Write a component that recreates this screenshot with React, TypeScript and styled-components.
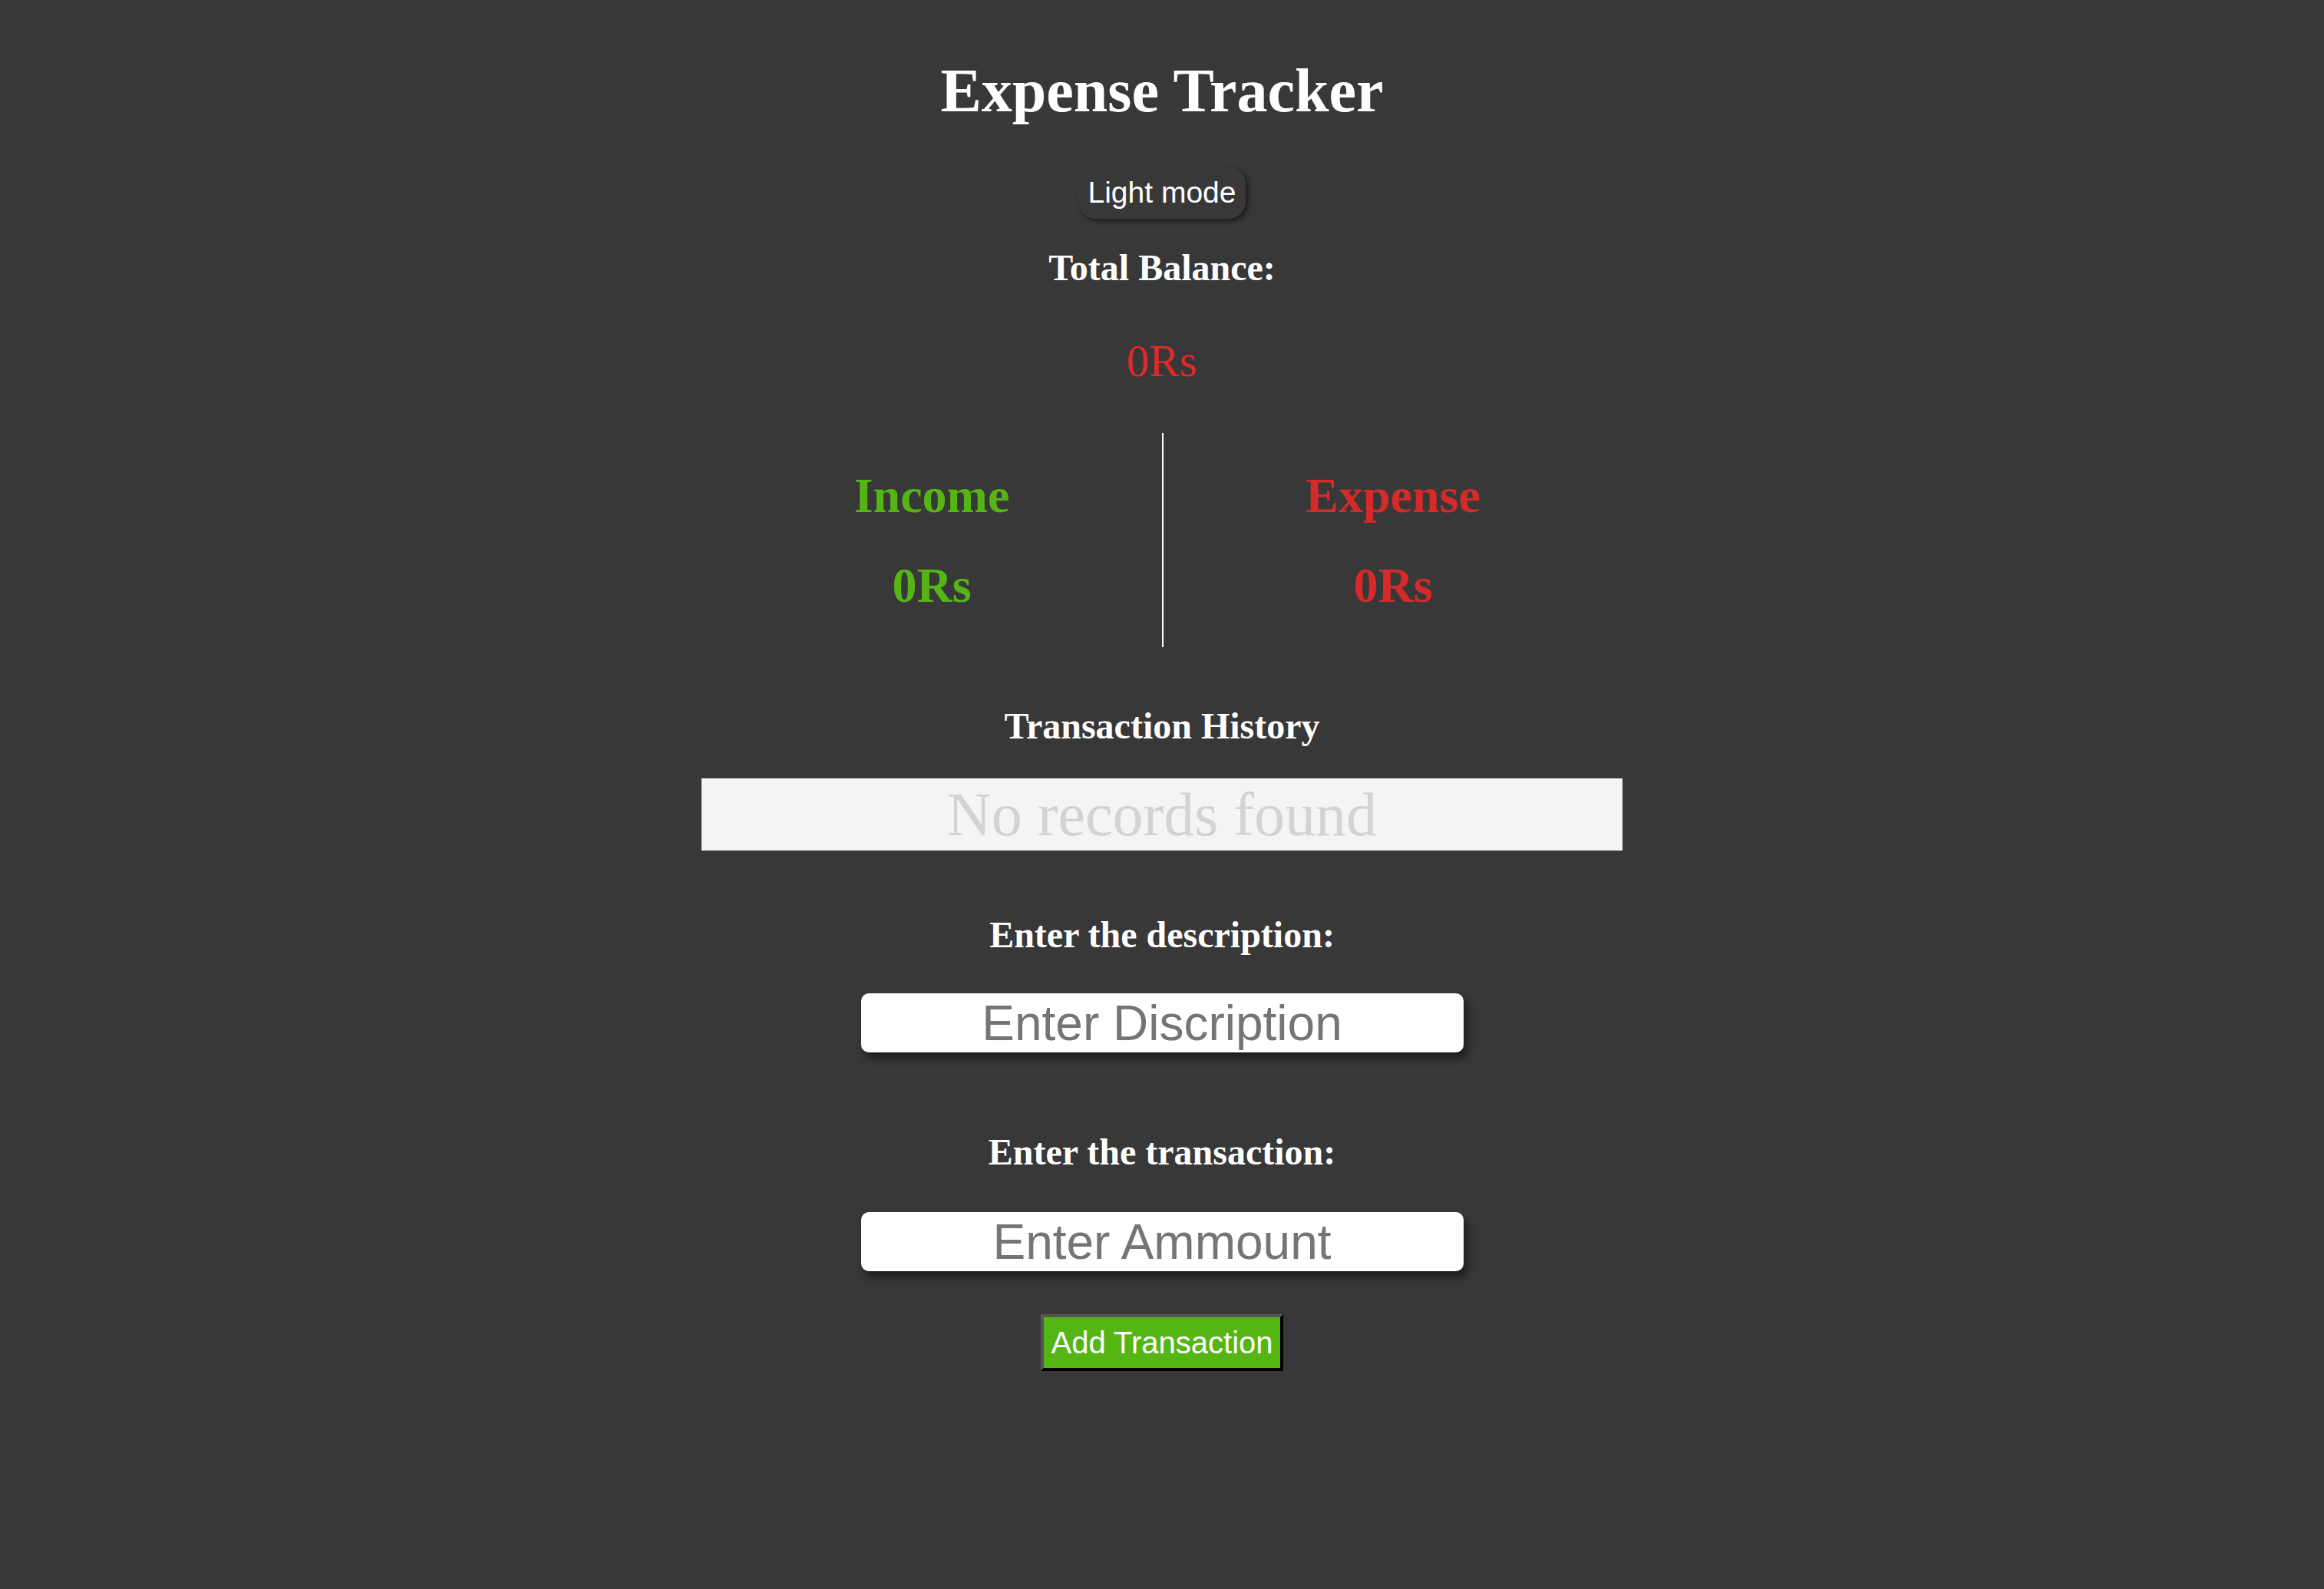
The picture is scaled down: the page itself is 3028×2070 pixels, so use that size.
import React, { useState } from "react";
import styled, { createGlobalStyle } from "styled-components";

const GlobalStyle = createGlobalStyle`
  body {
    margin: 0;
    background: #383838;
    font-family: "Liberation Serif", "Times New Roman", serif;
  }
`;

const Page = styled.div`
  display: flex;
  flex-direction: column;
  align-items: center;
  padding: 78px 0 200px;
  min-height: 2070px;
  box-sizing: border-box;
  color: #ffffff;
`;

const Title = styled.h1`
  margin: 0;
  font-size: 80px;
  line-height: 1;
  font-weight: bold;
`;

const ModeButton = styled.button`
  margin-top: 59px;
  padding: 12px 13px;
  font-family: "Liberation Sans", Arial, sans-serif;
  font-size: 39px;
  line-height: 44px;
  color: #ffffff;
  background: #383838;
  border: none;
  border-radius: 22px;
  box-shadow: 3px 3px 6px rgba(0, 0, 0, 0.55);
  cursor: pointer;
`;

const Label = styled.h3<{ $gap: number }>`
  margin: ${(p) => p.$gap}px 0 0;
  font-size: 48px;
  line-height: 1;
  font-weight: bold;
`;

const Amount = styled.div<{ $color: string; $bold?: boolean; $size: number; $gap?: number }>`
  margin-top: ${(p) => p.$gap ?? 0}px;
  font-size: ${(p) => p.$size}px;
  line-height: 1;
  font-weight: ${(p) => (p.$bold ? "bold" : "normal")};
  color: ${(p) => p.$color};
`;

const Summary = styled.div`
  margin-top: 64px;
  width: 1200px;
  display: grid;
  grid-template-columns: 1fr 1fr;
`;

const Column = styled.div<{ $divider?: boolean }>`
  display: flex;
  flex-direction: column;
  align-items: center;
  padding: 50px 0 48px;
  gap: 53px;
  border-left: ${(p) => (p.$divider ? "2px solid #ffffff" : "none")};
`;

const History = styled.div`
  margin-top: 44px;
  width: 1200px;
  height: 94px;
  background: #f4f4f4;
  color: #d3d3d3;
  font-size: 80px;
  line-height: 94px;
  text-align: center;
`;

const Field = styled.input<{ $gap: number }>`
  margin-top: ${(p) => p.$gap}px;
  width: 785px;
  height: 77px;
  box-sizing: border-box;
  padding: 0;
  border: none;
  border-radius: 10px;
  background: #ffffff;
  box-shadow: 5px 8px 12px rgba(0, 0, 0, 0.5);
  font-family: "Liberation Sans", Arial, sans-serif;
  font-size: 64px;
  text-align: center;
  color: #222;
  outline: none;

  &::placeholder {
    color: #757575;
  }
`;

const AddButton = styled.button`
  margin-top: 56px;
  padding: 11px 9px;
  font-family: "Liberation Sans", Arial, sans-serif;
  font-size: 40px;
  line-height: 44px;
  color: #ffffff;
  background: #55b514;
  border: 4px solid;
  border-color: #565656 #000000 #000000 #565656;
  cursor: pointer;
`;

export default function App() {
  const [desc, setDesc] = useState("");
  const [amount, setAmount] = useState("");

  return (
    <>
      <GlobalStyle />
      <Page>
        <Title>Expense Tracker</Title>
        <ModeButton>Light mode</ModeButton>
        <Label $gap={40}>Total Balance:</Label>
        <Amount $color="#e02a2a" $size={59} $gap={68}>
          0Rs
        </Amount>

        <Summary>
          <Column>
            <Amount $color="#55b515" $size={64} $bold>
              Income
            </Amount>
            <Amount $color="#55b515" $size={64} $bold>
              0Rs
            </Amount>
          </Column>
          <Column $divider>
            <Amount $color="#d62a2a" $size={64} $bold>
              Expense
            </Amount>
            <Amount $color="#d62a2a" $size={64} $bold>
              0Rs
            </Amount>
          </Column>
        </Summary>

        <Label $gap={79}>Transaction History</Label>
        <History>No records found</History>

        <Label $gap={86}>Enter the description:</Label>
        <Field
          $gap={52}
          placeholder="Enter Discription"
          value={desc}
          onChange={(e) => setDesc(e.target.value)}
        />

        <Label $gap={106}>Enter the transaction:</Label>
        <Field
          $gap={54}
          placeholder="Enter Ammount"
          value={amount}
          onChange={(e) => setAmount(e.target.value)}
        />

        <AddButton>Add Transaction</AddButton>
      </Page>
    </>
  );
}
